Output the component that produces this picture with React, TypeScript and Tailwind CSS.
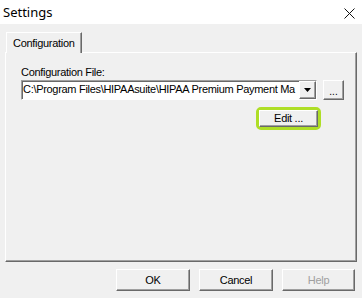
import React from "react";

const raised =
  "border border-t-white border-l-white border-r-[#696969] border-b-[#696969] shadow-[inset_-1px_-1px_0_#a0a0a0] bg-[#f0f0f0]";

export default function App() {
  return (
    <div
      className="w-[362px] h-[298px] bg-[#f0f0f0] flex flex-col overflow-hidden text-black tracking-[-0.3px]"
      style={{ fontFamily: '"Liberation Sans", Arial, sans-serif' }}
    >
      {/* Title bar */}
      <div className="h-[24px] bg-white flex items-center justify-between pl-[3px] pr-[7px]">
        <span
          className="text-[13px] leading-none tracking-normal"
          style={{ fontFamily: '"Noto Sans", "Open Sans", sans-serif' }}
        >
          Settings
        </span>
        <svg width="11" height="11" viewBox="0 0 11 11" className="mt-[2px]">
          <path d="M0.5 0.5 L10.5 10.5 M10.5 0.5 L0.5 10.5" stroke="#111" strokeWidth="1" />
        </svg>
      </div>

      {/* Body */}
      <div className="flex flex-col pt-[8px] pl-[5px]">
        {/* Tab row */}
        <div className="flex h-[20px] w-[352px]">
          <div className="ml-[1px] w-[76px] h-[21px] border-t border-l border-t-white border-l-white border-r border-r-[#696969] shadow-[inset_-1px_0_0_#a0a0a0] bg-[#f0f0f0] flex items-center pl-[6px] text-[11px] z-10">
            Configuration
          </div>
          <div className="flex-1" />
        </div>

        {/* Panel */}
        <div className="w-[352px] h-[210px] border border-t-white border-l-white border-r-[#696969] border-b-[#696969] shadow-[inset_-1px_-1px_0_#a0a0a0] flex flex-col pl-[15px] pt-[13px]">
          <div className="text-[11px] leading-[13px] h-[14px]">Configuration File:</div>
          <div className="flex items-center h-[20px]">
            <div className="w-[296px] h-[20px] flex border border-t-[#a0a0a0] border-l-[#a0a0a0] border-r-white border-b-white bg-white">
              <div className="flex-1 overflow-hidden whitespace-nowrap text-[11px] leading-[17px] pl-[1px] shadow-[inset_1px_1px_0_#696969]">
                C:\Program Files\HIPAAsuite\HIPAA Premium Payment Ma
              </div>
              <div className={`w-[17px] h-full flex items-center justify-center ${raised}`}>
                <svg width="7" height="4" viewBox="0 0 7 4">
                  <path d="M0 0 H7 L3.5 4 Z" fill="#000" />
                </svg>
              </div>
            </div>
            <div
              className={`ml-[6px] w-[21px] h-[20px] flex items-center justify-center text-[10px] leading-[10px] tracking-normal ${raised}`}
            >
              <span className="mt-[3px]">...</span>
            </div>
          </div>
          <div className="flex w-[300px] justify-end mt-[7px]">
            <div className="w-[65px] h-[23px] border-[3px] border-[#aede26] rounded-[5px] flex">
              <div className={`flex-1 flex items-center justify-center text-[11px] ${raised}`}>Edit ...</div>
            </div>
          </div>
        </div>

        {/* Buttons */}
        <div className="flex justify-end gap-[9px] w-[350px] mt-[7px]">
          <div className={`w-[74px] h-[22px] flex items-center justify-center text-[11px] ${raised}`}>OK</div>
          <div className={`w-[74px] h-[22px] flex items-center justify-center text-[11px] ${raised}`}>Cancel</div>
          <div className={`w-[73px] h-[22px] flex items-center justify-center text-[11px] text-[#a0a0a0] ${raised}`}>Help</div>
        </div>
      </div>
    </div>
  );
}
